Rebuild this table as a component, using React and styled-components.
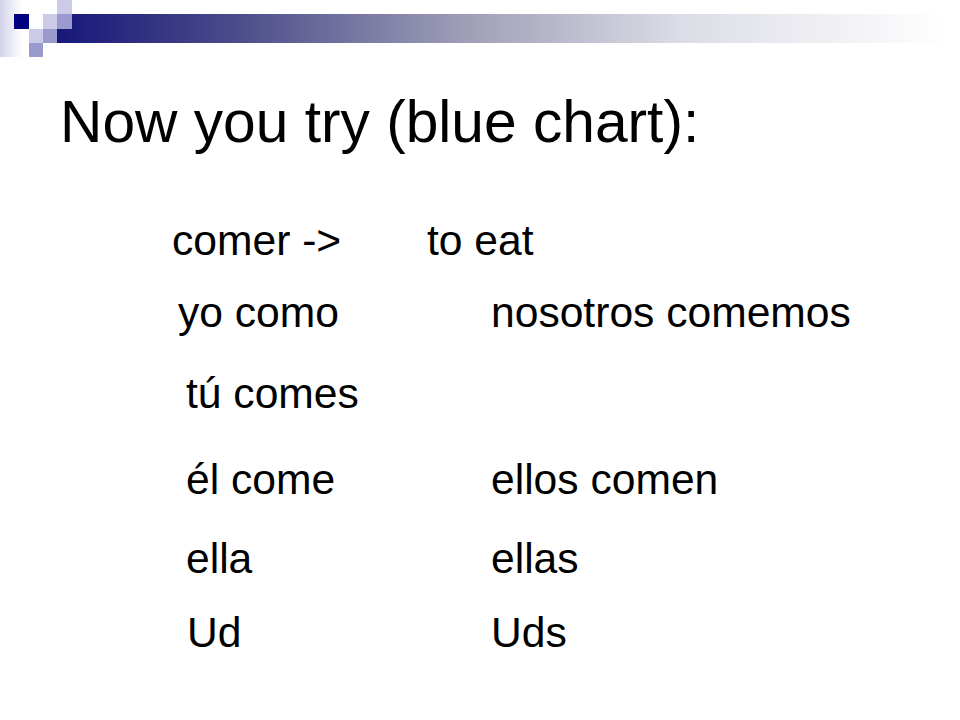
import React from 'react';
import styled, { createGlobalStyle } from 'styled-components';

const GlobalStyle = createGlobalStyle`
    html, body {
        margin: 0;
        padding: 0;
        background: #fff;
    }
    body {
        font-family: "Liberation Sans", Arial, sans-serif;
        color: #000;
    }
`;

const Slide = styled.div`
    width: 960px;
    height: 720px;
    background: #fff;
    overflow: hidden;
`;

const Banner = styled.svg`
    display: block;
    width: 960px;
    height: 57px;
`;

const Title = styled.h1`
    margin: 32px 0 0 60px;
    font-size: 58.7px;
    font-weight: normal;
    line-height: 66px;
    white-space: nowrap;
`;

const Chart = styled.div`
    margin-top: 61px;
    display: flex;
    flex-direction: column;
`;

const Row = styled.div`
    display: flex;
    margin-top: ${p => p.$gap || 0}px;
    font-size: 42.6px;
    line-height: 48px;
    height: 48px;
    white-space: nowrap;
`;

const Left = styled.span`
    box-sizing: border-box;
    padding-left: ${p => p.$indent}px;
    width: ${p => p.$width}px;
`;

const Right = styled.span``;

const Decoration = () => (
    <Banner viewBox="0 0 960 57">
        <defs>
            <linearGradient id="bar" x1="0" x2="1" y1="0" y2="0">
                <stop offset="0" stopColor="#17177a" />
                <stop offset="0.2" stopColor="#4b4b8a" />
                <stop offset="0.45" stopColor="#9c9cb6" />
                <stop offset="0.7" stopColor="#dcdce6" />
                <stop offset="1" stopColor="#ffffff" />
            </linearGradient>
            <linearGradient id="edge" x1="0" x2="1" y1="0" y2="0">
                <stop offset="0" stopColor="#d2d2ea" />
                <stop offset="1" stopColor="#ffffff" />
            </linearGradient>
        </defs>
        <rect x="0" y="0" width="22" height="57" fill="url(#edge)" />
        <rect x="57" y="14" width="890" height="29" fill="url(#bar)" />
        <rect x="14" y="14" width="15" height="15" fill="#000080" />
        <rect x="43" y="14" width="14" height="15" fill="#cbcbe8" />
        <rect x="57" y="0" width="15" height="14" fill="#cbcbe8" />
        <rect x="57" y="14" width="15" height="15" fill="#9a9acf" />
        <rect x="29" y="29" width="14" height="14" fill="#cbcbe8" />
        <rect x="43" y="29" width="14" height="14" fill="#9a9acf" />
        <rect x="29" y="43" width="14" height="14" fill="#9a9acf" />
    </Banner>
);

const rows = [
    { gap: 0, indent: 172, width: 427, left: 'comer ->', right: 'to eat' },
    { gap: 24, indent: 178, width: 491, left: 'yo como', right: 'nosotros comemos' },
    { gap: 33, indent: 186, width: 491, left: 'tú comes', right: '' },
    { gap: 38, indent: 186, width: 491, left: 'él come', right: 'ellos comen' },
    { gap: 31, indent: 186, width: 491, left: 'ella', right: 'ellas' },
    { gap: 26, indent: 187, width: 491, left: 'Ud', right: 'Uds' },
];

const App = () => {
    return (
        <Slide>
            <GlobalStyle />
            <Decoration />
            <Title>Now you try (blue chart):</Title>
            <Chart>
                {rows.map((r, i) => (
                    <Row key={i} $gap={r.gap}>
                        <Left $indent={r.indent} $width={r.width}>{r.left}</Left>
                        <Right>{r.right}</Right>
                    </Row>
                ))}
            </Chart>
        </Slide>
    );
};

export default App;
